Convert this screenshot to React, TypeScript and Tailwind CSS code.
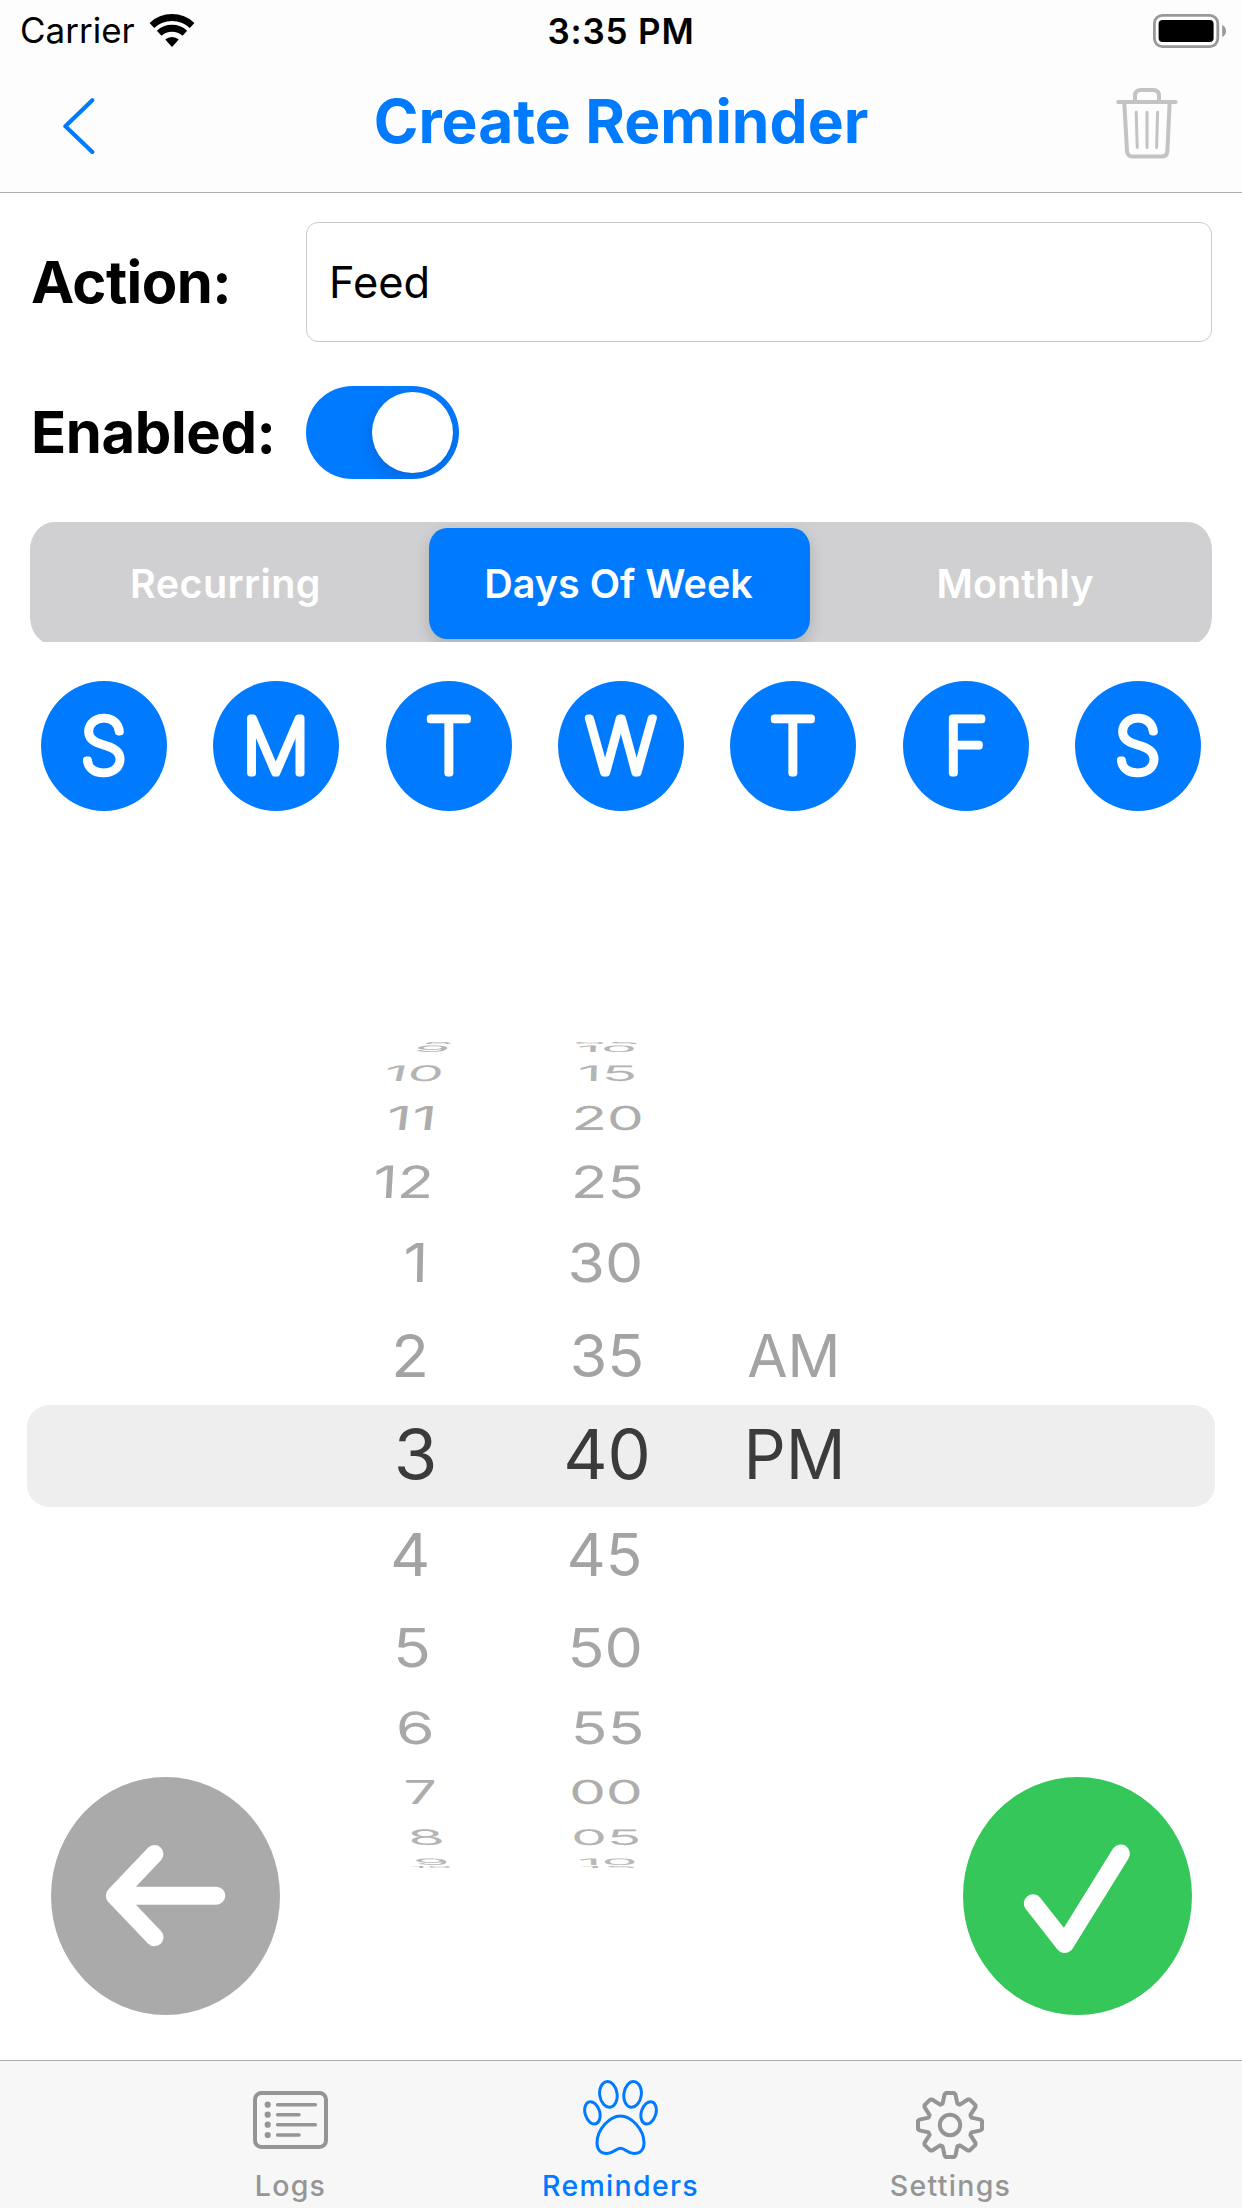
import type { ReactNode } from "react";

const DAYS = ["S", "M", "T", "W", "T", "F", "S"];

type Cell = { text: string; dx: number; sx: number };
type Row = { gap: string; color: string; sy: number; skew: number; cells: Cell[] };

const c = (text: string, dx: number, sx: number): Cell => ({ text, dx, sx });

const ABOVE: Row[] = [
  { gap: "mt-[232px]", color: "text-[#b0b0b0]", sy: 0.035, skew: 0, cells: [c("8", 23, 0.76), c("05", -1, 0.8)] },
  { gap: "mt-[6px]", color: "text-[#b4b4b4]", sy: 0.13, skew: -5, cells: [c("9", 17, 0.86), c("10", 0, 0.85)] },
  { gap: "mt-[24px]", color: "text-[#b4b4b4]", sy: 0.315, skew: -5, cells: [c("10", -1, 0.84), c("15", 0, 0.86)] },
  { gap: "mt-[45px]", color: "text-[#adadad]", sy: 0.485, skew: -3.8, cells: [c("11", -3, 0.91), c("20", 0.4, 0.86)] },
  { gap: "mt-[64px]", color: "text-[#a9a9a9]", sy: 0.655, skew: -2.5, cells: [c("12", -11, 0.88), c("25", 0, 0.885)] },
  { gap: "mt-[80px]", color: "text-[#a6a6a6]", sy: 0.79, skew: -1, cells: [c("1", 1, 0.9), c("30", -2, 0.89)] },
  { gap: "mt-[93px]", color: "text-[#a3a3a3]", sy: 0.87, skew: 0, cells: [c("2", -4.6, 0.91), c("35", 0.4, 0.895), c("AM", 0.6, 0.86)] },
];

const SELECTED: Cell[] = [c("3", 0.6, 1.04), c("40", -0.4, 1.01), c("PM", 1.2, 0.975)];

const BELOW: Row[] = [
  { gap: "mt-[47px]", color: "text-[#a3a3a3]", sy: 0.87, skew: 0, cells: [c("4", -4.8, 0.91), c("45", -2.1, 0.887)] },
  { gap: "mt-[93px]", color: "text-[#a6a6a6]", sy: 0.79, skew: 1, cells: [c("5", -2.9, 0.92), c("50", -1.9, 0.896)] },
  { gap: "mt-[81px]", color: "text-[#a9a9a9]", sy: 0.655, skew: 2, cells: [c("6", 0, 0.92), c("55", 0.2, 0.892)] },
  { gap: "mt-[64px]", color: "text-[#adadad]", sy: 0.485, skew: 3.5, cells: [c("7", 6, 0.87), c("00", -1, 0.86)] },
  { gap: "mt-[45px]", color: "text-[#b4b4b4]", sy: 0.315, skew: 4, cells: [c("8", 11, 0.88), c("05", -1, 0.835)] },
  { gap: "mt-[25px]", color: "text-[#b8b8b8]", sy: 0.13, skew: 5, cells: [c("9", 16.5, 0.86), c("10", 0.5, 0.85)] },
  { gap: "mt-[5px]", color: "text-[#b8b8b8]", sy: 0.035, skew: 0, cells: [c("10", 16, 0.6), c("15", 1, 0.84)] },
];

function Cells({ cells, sy, skew }: { cells: Cell[]; sy: number; skew: number }) {
  return (
    <>
      {cells.map((cell, i) => (
        <div key={i} className={i === 2 ? "flex w-[180px] justify-center" : "flex w-[192px] justify-center"}>
          <span
            className="text-[68px] leading-none whitespace-nowrap"
            style={{ transform: `translateX(${cell.dx}px) scale(${cell.sx}, ${sy}) skewX(${i === 0 ? skew : skew / 8}deg)` }}
          >
            {cell.text}
          </span>
        </div>
      ))}
    </>
  );
}

function WheelRow({ row }: { row: Row }) {
  return (
    <div className={`flex h-0 items-center pl-[319px] ${row.gap} ${row.color}`}>
      <Cells cells={row.cells} sy={row.sy} skew={row.skew} />
    </div>
  );
}

function WifiIcon() {
  return (
    <svg width="46" height="33" viewBox="0 0 46 33" fill="none" stroke="#000" strokeWidth="6.8">
      <path d="M2.9 11.4A29.5 29.5 0 0 1 43.1 11.4" />
      <path d="M10.2 19.3A18.7 18.7 0 0 1 35.8 19.3" />
      <path d="M23 33L16.2 25.6A10 10 0 0 1 29.8 25.6Z" fill="#000" stroke="none" />
    </svg>
  );
}

function BatteryIcon() {
  return (
    <svg width="74" height="34" viewBox="0 0 74 34">
      <rect x="1.4" y="1.4" width="63.4" height="31.2" rx="8" fill="none" stroke="#989898" strokeWidth="2.8" />
      <rect x="5.6" y="6" width="55" height="22" rx="4" />
      <path d="M69.2 11Q73 13 73 17Q73 21 69.2 23Z" fill="#989898" />
    </svg>
  );
}

function TrashIcon() {
  return (
    <svg width="62" height="72" viewBox="0 0 62 72" fill="none" stroke="#c3c3c3" strokeWidth="4" strokeLinecap="round" className="mt-[2px]">
      <path d="M2.2 14H59.6" />
      <path d="M19 13V8Q19 2 25 2H37Q43 2 43 8V13" strokeLinecap="butt" />
      <path d="M8.3 15L11 63Q11.4 68.6 17 68.6H45.5Q51 68.6 51.4 63L53.6 15" strokeLinecap="butt" />
      <path d="M20.2 24.3L21.2 59.5M31 24.3V59.5M41.6 24.3L40.6 59.5" strokeWidth="3" />
    </svg>
  );
}

function LogsIcon() {
  return (
    <svg width="75" height="58" viewBox="0 0 75 58" fill="none" stroke="#959595">
      <rect x="2" y="2" width="71" height="54" rx="6.5" strokeWidth="4" />
      {[13.7, 23.7, 33.7, 44].map((y, i) => (
        <g key={y}>
          <circle cx="14.7" cy={y} r="3.1" fill="#959595" stroke="none" />
          <path d={`M24.6 ${y}H${i % 2 ? 46 : 62.4}`} strokeWidth="3.4" strokeLinecap="round" />
        </g>
      ))}
    </svg>
  );
}

function PawIcon() {
  return (
    <svg width="75" height="75" viewBox="0 0 75 75" fill="none" stroke="#007aff" strokeWidth="3">
      <ellipse cx="25.4" cy="14.4" rx="8.7" ry="12.9" transform="rotate(-8 25.4 14.4)" />
      <ellipse cx="49.6" cy="14.4" rx="8.7" ry="12.9" transform="rotate(8 49.6 14.4)" />
      <ellipse cx="9.4" cy="32.8" rx="7.3" ry="11.4" transform="rotate(-17 9.4 32.8)" />
      <ellipse cx="65.6" cy="32.8" rx="7.3" ry="11.4" transform="rotate(17 65.6 32.8)" />
      <path d="M37.5 36C27 36 14 49 14 63C14 70 18 73.5 24 73.5C31 73.5 32.5 68.3 37.5 68.3C42.5 68.3 44 73.5 51 73.5C57 73.5 61 70 61 63C61 49 48 36 37.5 36Z" />
    </svg>
  );
}

const TOOTH = [
  [-7.4, -21.4],
  [-5.4, -30.6],
  [-4, -32],
  [4, -32],
  [5.4, -30.6],
  [7.4, -21.4],
];
const GEAR = Array.from({ length: 8 }, (_, i) => {
  const a = (i * Math.PI) / 4;
  return TOOTH.map(([x, y]) => `${(34 + x * Math.cos(a) - y * Math.sin(a)).toFixed(2)} ${(34 + x * Math.sin(a) + y * Math.cos(a)).toFixed(2)}`).join("L");
}).join("L");

function GearIcon() {
  return (
    <svg width="68" height="68" viewBox="0 0 68 68" fill="none" stroke="#959595" strokeWidth="4" strokeLinejoin="round">
      <path d={`M${GEAR}Z`} />
      <circle cx="34" cy="34" r="10.2" />
    </svg>
  );
}

function Tab({ icon, label, active = false }: { icon: ReactNode; label: string; active?: boolean }) {
  return (
    <div className={`flex w-[330px] flex-col items-center ${active ? "text-[#007aff]" : "text-[#959595]"}`}>
      <div className="flex h-[106px] items-end">{icon}</div>
      <span className="pl-[1px] text-[28.5px] leading-[38px] font-medium tracking-[1.3px]">{label}</span>
    </div>
  );
}

export default function App() {
  return (
    <div className="relative flex h-[2208px] w-[1242px] flex-col overflow-hidden bg-white font-['Inter',sans-serif] text-black">
      <header className="h-[193px] shrink-0 border-b border-[#b0b0b0] bg-[#fdfdfd]">
        <div className="grid h-[63px] grid-cols-3 items-center pr-[15px] pl-[20px]">
          <div className="flex items-center gap-[14px] pb-[2px]">
            <span className="text-[35px] leading-none">Carrier</span>
            <WifiIcon />
          </div>
          <div className="pr-[5px] text-center text-[35px] leading-none font-semibold tracking-[0.8px]">3:35 PM</div>
          <div className="flex justify-end pb-[2px]">
            <BatteryIcon />
          </div>
        </div>
        <div className="flex h-[120px] items-center justify-between pr-[64px] pl-[62px]">
          <svg width="34" height="57" viewBox="0 0 34 57" fill="none" stroke="#007aff" strokeWidth="4.2" strokeLinecap="round" strokeLinejoin="round" className="mt-[4px]">
            <path d="M30.3 3.3L3.4 29.2L30.3 55" />
          </svg>
          <h1 className="mb-[3px] ml-[30px] text-[60.5px] leading-none font-bold text-[#007aff]">Create Reminder</h1>
          <TrashIcon />
        </div>
      </header>

      <main className="flex-1">
        <div className="mt-[29px] flex h-[120px] pr-[30px] pl-[31px]">
          <div className="flex w-[275px] items-center text-[58px] leading-none font-bold tracking-[-0.6px]">Action:</div>
          <div className="flex flex-1 items-center rounded-[12px] border border-[#cbcbcb] pt-[2px] pl-[22px] text-[43.4px] leading-none">Feed</div>
        </div>
        <div className="mt-[44px] flex h-[93px] items-center pl-[31px]">
          <div className="w-[275px] pb-[2px] text-[58px] leading-none font-bold tracking-[-0.4px]">Enabled:</div>
          <div className="flex h-[93px] w-[153px] items-center justify-end overflow-hidden rounded-full bg-[#007aff] pr-[6px]">
            <div className="h-[81px] w-[81px] rounded-full bg-white shadow-[0_6px_16px_rgba(0,0,0,0.15)]" />
          </div>
        </div>

        <div className="mx-[30px] mt-[43px] h-[120px] overflow-hidden">
          <div className="grid h-[123px] grid-cols-[399px_381px_402px] bg-[#d0d0d2] pt-[6px] text-[39.5px] leading-none font-semibold text-white [border-radius:24px/28px]">
            <div className="flex h-[111px] items-center justify-center pt-[2px] pr-[8px] tracking-[0.4px]">Recurring</div>
            <div className="flex h-[111px] items-center justify-center bg-[#007aff] pt-[2px] pr-[2px] shadow-[0_6px_16px_rgba(0,0,0,0.16)] [border-radius:18px/20px]">Days Of Week</div>
            <div className="flex h-[111px] items-center justify-center pt-[2px] pl-[8px]">Monthly</div>
          </div>
        </div>

        <div className="mt-[39px] flex justify-between px-[41px]">
          {DAYS.map((d, i) => (
            <svg key={i} width="126" height="130" viewBox="0 0 126 130">
              <ellipse cx="63" cy="65" rx="63" ry="65" fill="#007aff" />
              <text x="62.8" y="92" textAnchor="middle" fontFamily="Inter" fontWeight="100" fontSize="75" fill="#fff" stroke="#fff" strokeWidth="7.2" strokeLinejoin="round" strokeLinecap="round">
                {d}
              </text>
            </svg>
          ))}
        </div>

        <div className="flex flex-col">
          {ABOVE.map((row, i) => (
            <WheelRow key={i} row={row} />
          ))}
          <div className="mx-[27px] mt-[50px] flex h-[102px] items-center rounded-[22px] bg-[#eeeeee] pb-[4px] pl-[292px] text-[#3b3b3b]">
            <Cells cells={SELECTED} sy={1.01} skew={0} />
          </div>
          {BELOW.map((row, i) => (
            <WheelRow key={i} row={row} />
          ))}
        </div>
      </main>

      <div className="absolute inset-x-0 top-[1777px] flex justify-between pr-[50px] pl-[51px]">
        <svg width="229" height="238" viewBox="0 0 229 238" fill="none" stroke="#fff" strokeWidth="18" strokeLinecap="round" strokeLinejoin="round">
          <ellipse cx="114.5" cy="119" rx="114.5" ry="119" fill="#aaaaaa" stroke="none" />
          <path d="M103.5 77L63.8 118.7L103.5 160.3M66 118.7H165.3" />
        </svg>
        <svg width="229" height="238" viewBox="0 0 229 238" fill="none" stroke="#fff" strokeWidth="18.4" strokeLinecap="round" strokeLinejoin="round">
          <ellipse cx="114.5" cy="119" rx="114.5" ry="119" fill="#35c759" stroke="none" />
          <path d="M70 126.4L101.7 166.8L157.7 76.6" />
        </svg>
      </div>

      <nav className="flex h-[148px] shrink-0 justify-center border-t border-[#b0b0b0] bg-[#f7f7f7] pr-[2px]">
        <Tab icon={<div className="mb-[18px]"><LogsIcon /></div>} label="Logs" />
        <Tab icon={<div className="mb-[12px]"><PawIcon /></div>} label="Reminders" active />
        <Tab icon={<div className="mb-[8px]"><GearIcon /></div>} label="Settings" />
      </nav>
    </div>
  );
}
